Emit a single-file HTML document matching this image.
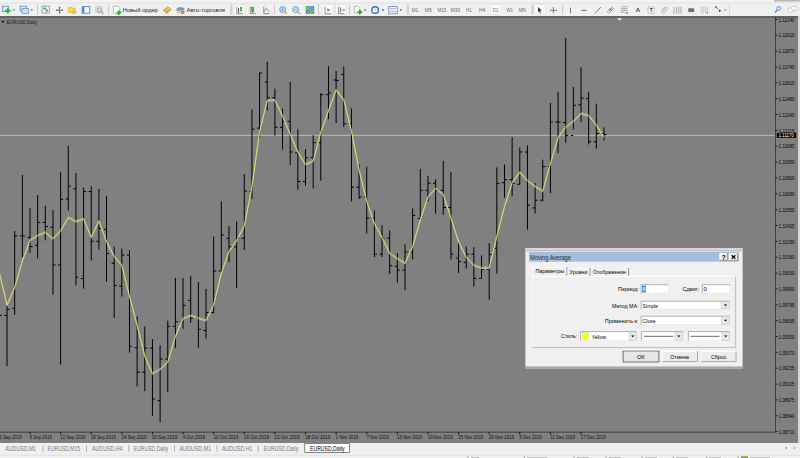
<!DOCTYPE html>
<html><head><meta charset="utf-8">
<style>
*{margin:0;padding:0}
html,body{width:800px;height:458px;overflow:hidden;background:#f0f0f0}
svg{position:absolute;left:0;top:0;font-family:"Liberation Sans", sans-serif}
</style></head><body>
<svg width="800" height="458" viewBox="0 0 800 458">
<rect x="0" y="0" width="800" height="16" fill="#f0f0f0"/>
<rect x="0" y="0" width="800" height="2.6" fill="#f3f3f3"/>
<path d="M0,3H800" stroke="#dcdcdc" stroke-width="0.8"/>
<rect x="774" y="0" width="26" height="1.6" fill="#b8b8b8"/>
<path d="M37.5,4.5V14.5" stroke="#c4c4c4" stroke-width="0.9"/>
<path d="M108.6,4.5V14.5" stroke="#c4c4c4" stroke-width="0.9"/>
<path d="M274.5,4.5V14.5" stroke="#c4c4c4" stroke-width="0.9"/>
<path d="M318.6,4.5V14.5" stroke="#c4c4c4" stroke-width="0.9"/>
<path d="M349.6,4.5V14.5" stroke="#c4c4c4" stroke-width="0.9"/>
<path d="M562.6,4.5V14.5" stroke="#c4c4c4" stroke-width="0.9"/>
<rect x="230.2" y="4.6" width="2.2" height="10.2" fill="#d0d0d0"/>
<rect x="406.8" y="4.6" width="2.2" height="10.2" fill="#d0d0d0"/>
<rect x="531.3" y="4.6" width="2.2" height="10.2" fill="#d0d0d0"/>
<path d="M729.5,3.5V16" stroke="#d4d4d4" stroke-width="0.8"/>
<rect x="234" y="4.3" width="11" height="10.2" fill="#fbfbfb" stroke="#dadada" stroke-width="0.6"/>
<rect x="322" y="4.3" width="11.199999999999989" height="10.2" fill="#fbfbfb" stroke="#dadada" stroke-width="0.6"/>
<rect x="335.4" y="4.3" width="11.200000000000045" height="10.2" fill="#fbfbfb" stroke="#dadada" stroke-width="0.6"/>
<rect x="490.3" y="4.3" width="11.399999999999977" height="10.2" fill="#fbfbfb" stroke="#dadada" stroke-width="0.6"/>
<rect x="534.5" y="4.3" width="11.200000000000045" height="10.2" fill="#fbfbfb" stroke="#dadada" stroke-width="0.6"/>
<rect x="2.4" y="6.2" width="6" height="5.4" fill="#dbe8f5" stroke="#5a8ac6" stroke-width="0.8"/>
<path d="M7.8,8.2V13.4M5.2,10.8H10.6" stroke="#22b822" stroke-width="1.8"/>
<path d="M12.8,9.4H15.2L14,10.8Z" fill="#333"/>
<rect x="20.2" y="6.2" width="6.4" height="5" fill="#e4eef8" stroke="#5a8ac6" stroke-width="0.8"/>
<rect x="22" y="8.6" width="6.6" height="4.8" fill="#d0e0f0" stroke="#6a98cc" stroke-width="0.8"/>
<path d="M30.6,9.4H33L31.8,10.8Z" fill="#333"/>
<rect x="42.1" y="6.2" width="7.2" height="6.8" fill="#fff" stroke="#6a9ad0" stroke-width="0.9"/>
<rect x="43.6" y="7.4" width="2.4" height="2.4" fill="#3cb043" transform="rotate(45 44.8 8.6)"/>
<rect x="45.6" y="9.6" width="2.4" height="2.4" fill="#ec7040" transform="rotate(45 46.8 10.8)"/>
<path d="M59.6,6.8V13.6M56.2,10.2H63" stroke="#666" stroke-width="0.9"/>
<path d="M59.6,6.6L58.6,8H60.6ZM59.6,13.8L58.6,12.4H60.6ZM56,10.2L57.4,9.2V11.2ZM63.2,10.2L61.8,9.2V11.2Z" fill="#555"/>
<path d="M68.3,7.2H71.4L72.2,8H75V12.6H68.3Z" fill="#f3d25a" stroke="#d6a82a" stroke-width="0.5"/>
<path d="M74.4,9.6L75.2,11.2L76.9,11.4L75.6,12.4L76,14L74.4,13.1L72.8,14L73.2,12.4L71.9,11.4L73.6,11.2Z" fill="#f6c830" stroke="#c89a20" stroke-width="0.3"/>
<rect x="82.2" y="6.6" width="7.6" height="6.6" fill="#f4f6fb" stroke="#4f86c8" stroke-width="0.9"/>
<rect x="82.6" y="7" width="1.6" height="5.8" fill="#3a78c2"/>
<rect x="95.8" y="6.4" width="6.4" height="6.4" fill="#f4f4f0" stroke="#b8b8a8" stroke-width="0.6"/>
<circle cx="99.2" cy="10" r="2.2" fill="#cfe4f6" stroke="#5a90c8" stroke-width="0.8"/>
<path d="M100.8,11.6L103.4,14" stroke="#d8a828" stroke-width="1.2"/>
<path d="M113.4,6.2H118.4L119.8,7.6V13.4H113.4Z" fill="#fff" stroke="#a0a0a0" stroke-width="0.7"/>
<path d="M118.8,10.4V15M116.5,12.7H121.1" stroke="#22b022" stroke-width="1.7"/>
<text x="122.8" y="12.3" font-size="6.2" fill="#1a1a2e" textLength="35" lengthAdjust="spacingAndGlyphs">Новый ордер</text>
<path d="M163.4,10.2L167.8,6.8L171.2,9.6L166.8,13.4Z" fill="#e6b42c" stroke="#a87a20" stroke-width="0.6"/>
<path d="M164.8,10.2L167.8,7.8L170,9.6M165.6,11L168.4,8.8" stroke="#fbe9a0" stroke-width="0.5" fill="none"/>
<path d="M176.4,8.8Q180.5,5.4 184.6,8.8L184,12.4H177Z" fill="#5aa0d8"/>
<path d="M176.8,10.4H184.2L183.4,13.2H177.6Z" fill="#f0d040"/>
<circle cx="182.6" cy="12.3" r="2" fill="#d83030" stroke="#fff" stroke-width="0.5"/>
<rect x="182" y="11.8" width="1.2" height="1.2" fill="#fff"/>
<text x="186.5" y="12.2" font-size="6.2" fill="#1a1a2e" textLength="38.5" lengthAdjust="spacingAndGlyphs">Авто-торговля</text>
<path d="M236.8,6.6V13.6H242.8" stroke="#505050" stroke-width="0.6" fill="none"/>
<path d="M238.6,8V12.6M238,11.8H238.6M241,6.8V11.6M241,7.8H241.8" stroke="#222" stroke-width="0.8" fill="none"/>
<path d="M241,7.4V11" stroke="#2a9a2a" stroke-width="0.9"/>
<path d="M250.2,6.6V13.6H256.2" stroke="#505050" stroke-width="0.6" fill="none"/>
<path d="M252.6,6.6V13" stroke="#333" stroke-width="0.5"/>
<rect x="251.6" y="7.6" width="2.2" height="4.2" fill="#30c030" stroke="#1a7a1a" stroke-width="0.4"/>
<path d="M263.8,6.6V13.6H269.8" stroke="#505050" stroke-width="0.6" fill="none"/>
<path d="M264.2,11.6L266,8.4L268,10.2L269.6,11.8" stroke="#2aa02a" stroke-width="0.7" fill="none"/>
<circle cx="282.6" cy="9.6" r="2.9" fill="#cfe6f8" stroke="#4f8fd0" stroke-width="0.9"/>
<path d="M284.6,11.6L287.0,14" stroke="#d8a830" stroke-width="1.3"/>
<circle cx="295.6" cy="9.6" r="2.9" fill="#cfe6f8" stroke="#4f8fd0" stroke-width="0.9"/>
<path d="M297.6,11.6L300.0,14" stroke="#d8a830" stroke-width="1.3"/>
<path d="M281.4,9.6H283.8M282.6,8.4V10.8" stroke="#2a6ab8" stroke-width="0.6"/>
<path d="M294.4,9.6H296.8" stroke="#2a6ab8" stroke-width="0.6"/>
<rect x="305.8" y="6.2" width="4" height="3.6" fill="#3aaa3a"/><rect x="310.2" y="6.2" width="4" height="3.6" fill="#3a78d0"/>
<rect x="305.8" y="10.2" width="4" height="3.6" fill="#3a78d0"/><rect x="310.2" y="10.2" width="4" height="3.6" fill="#3aaa3a"/>
<path d="M306.6,8H308.8M311,8H313.2M306.6,12H308.8M311,12H313.2" stroke="#fff" stroke-width="0.7"/>
<path d="M325,6.6V13.6H331" stroke="#505050" stroke-width="0.6" fill="none"/>
<path d="M327.4,8.2L330.2,10L327.4,11.8Z" fill="#30b030"/>
<path d="M338.4,6.6V13.6H344.4" stroke="#505050" stroke-width="0.6" fill="none"/>
<rect x="339.8" y="7.4" width="1.4" height="5" fill="#4a90d0"/>
<path d="M342,10H344.6M343.6,9L344.6,10L343.6,11" stroke="#e05030" stroke-width="0.8" fill="none"/>
<path d="M354.4,6.4H358.6L359.8,7.6V12.6H354.4Z" fill="#fff" stroke="#a0a0a0" stroke-width="0.7"/>
<path d="M359.8,9.8V14.6M357.4,12.2H362.2" stroke="#22b022" stroke-width="1.7"/>
<path d="M364,9.6H366.4L365.2,11Z" fill="#333"/>
<circle cx="375.1" cy="10" r="3.3" fill="#fff" stroke="#2a74c8" stroke-width="1.4"/>
<path d="M375.1,8.4V10H376" stroke="#555" stroke-width="0.4" fill="none"/>
<path d="M381.8,9.6H384.2L383,11Z" fill="#333"/>
<rect x="388.8" y="6.6" width="8.4" height="7.2" fill="#f4f8fc" stroke="#4f86c8" stroke-width="0.8"/>
<path d="M390,9L392,8.2L394,9L396,8.4" stroke="#e04040" stroke-width="0.6" fill="none"/>
<path d="M390,11.6L392,11L394,11.8L396,11.2" stroke="#40a040" stroke-width="0.6" fill="none"/>
<path d="M399.6,9.6H402L400.8,11Z" fill="#333"/>
<text x="411.8" y="11.8" font-size="5" fill="#6a6a6a" textLength="6.5" lengthAdjust="spacingAndGlyphs">M1</text>
<text x="424.8" y="11.8" font-size="5" fill="#6a6a6a" textLength="7" lengthAdjust="spacingAndGlyphs">M5</text>
<text x="437.5" y="11.8" font-size="5" fill="#6a6a6a" textLength="8.9" lengthAdjust="spacingAndGlyphs">M15</text>
<text x="450.8" y="11.8" font-size="5" fill="#6a6a6a" textLength="9.4" lengthAdjust="spacingAndGlyphs">M30</text>
<text x="466" y="11.8" font-size="5" fill="#6a6a6a" textLength="5.6" lengthAdjust="spacingAndGlyphs">H1</text>
<text x="479" y="11.8" font-size="5" fill="#6a6a6a" textLength="6.4" lengthAdjust="spacingAndGlyphs">H4</text>
<text x="492.7" y="11.8" font-size="5" fill="#6a6a6a" textLength="5.7" lengthAdjust="spacingAndGlyphs">D1</text>
<text x="506.6" y="11.8" font-size="5" fill="#6a6a6a" textLength="6.4" lengthAdjust="spacingAndGlyphs">W1</text>
<text x="518.7" y="11.8" font-size="5" fill="#6a6a6a" textLength="7.3" lengthAdjust="spacingAndGlyphs">MN</text>
<path d="M538,7L541.8,10.6L540,10.8L541,13.2L540.2,13.6L539.2,11.2L538,12.6Z" fill="#333"/>
<path d="M553.4,7V13.6M549.8,10.3H557" stroke="#555" stroke-width="0.7"/>
<path d="M570.5,7.6V13.2" stroke="#555" stroke-width="0.8"/>
<path d="M581.2,10.4H586.8" stroke="#555" stroke-width="0.8"/>
<path d="M595,13.4L600.8,7.2" stroke="#555" stroke-width="0.7"/>
<path d="M607,12L612.6,6.6M608.6,13.4L614,8" stroke="#555" stroke-width="0.6"/>
<path d="M609.6,8.6L611.6,10.6M611.6,8.6L609.6,10.6" stroke="#333" stroke-width="0.6"/>
<path d="M620.8,6.8H627.6M620.8,8.6H627.6M620.8,10.4H627.6M620.8,12.2H625" stroke="#666" stroke-width="0.5"/>
<path d="M625.8,12.6H628.2L627,14Z" fill="#333"/>
<text x="635.4" y="12.1" font-size="5.6" font-weight="bold" fill="#444" textLength="4.6" lengthAdjust="spacingAndGlyphs">A</text>
<rect x="648" y="7" width="6" height="6.4" fill="#f8f8f8" stroke="#999" stroke-width="0.5"/>
<text x="649.4" y="12.4" font-size="5.6" font-weight="bold" fill="#444">T</text>
<path d="M661.4,12.6L667,7M663,13.8L668.4,8.4M661.4,10.8L665.4,6.8" stroke="#777" stroke-width="0.6"/>
<path d="M674,6.8V13.6M676.4,6.8V13.6M678.8,6.8V13.6M681,6.8V13.6" stroke="#888" stroke-width="0.7"/>
<rect x="688.2" y="8.2" width="6" height="3.8" rx="0.8" fill="#707070"/>
<path d="M701.2,6.4V13M703.2,6.4V13M705.2,6.4V13M707.2,6.4V12" stroke="#999" stroke-width="0.5"/>
<path d="M706.2,12.6H708.4L707.3,13.8Z" fill="#444"/>
<path d="M715.6,6.8L718,9.2M716.8,6.8H715.6V8" stroke="#333" stroke-width="0.7" fill="none"/>
<path d="M718.6,9.6L721.2,10.4L719.4,12.2Z" fill="#333"/>
<path d="M724.2,9.6H726L725.1,10.8Z" fill="#333"/>
<circle cx="778.8" cy="8.4" r="1.8" fill="#fff" stroke="#2a70d0" stroke-width="0.9"/>
<path d="M777.4,9.8L775,12.4" stroke="#2a70d0" stroke-width="1.2"/>
<ellipse cx="791" cy="10" rx="3.6" ry="2.4" fill="#fafafa" stroke="#b0b0b0" stroke-width="0.6"/>
<ellipse cx="794.2" cy="8.4" rx="3.4" ry="2.2" fill="#fafafa" stroke="#b0b0b0" stroke-width="0.6"/>
<rect x="0" y="16" width="798" height="427" fill="#808080"/>
<rect x="0" y="16.3" width="798" height="1.4" fill="#585858"/>
<rect x="798" y="16" width="2" height="427" fill="#d8d8d8"/>
<path d="M0,135.3H775" stroke="#c4c4c4" stroke-width="0.9"/>
<path d="M7.04,305.6V366.1M4.44,315.4H7.04M7.04,309.3H9.64M14.69,231.0V314.9M12.09,308.3H14.69M14.69,235.8H17.29M22.35,174.9V257.2M19.75,235.8H22.35M22.35,236.0H24.95M30.00,208.0V252.7M27.40,237.4H30.00M30.00,246.6H32.60M37.65,195.2V258.4M35.05,245.3H37.65M37.65,222.4H40.25M45.31,205.8V240.4M42.71,222.4H45.31M45.31,226.5H47.91M52.96,210.0V294.6M50.36,227.3H52.96M52.96,265.0H55.56M60.61,172.3V364.5M58.01,265.0H60.61M60.61,199.3H63.21M68.27,145.7V210.7M65.67,199.0H68.27M68.27,186.2H70.86M75.92,173.2V285.4M73.32,188.8H75.92M75.92,277.2H78.52M83.57,187.5V288.7M80.97,278.5H83.57M83.57,191.6H86.17M91.22,186.2V260.5M88.62,191.6H91.22M91.22,241.2H93.82M98.88,188.8V249.7M96.28,241.2H98.88M98.88,228.4H101.48M106.53,195.7V281.8M103.93,229.4H106.53M106.53,253.5H109.13M114.18,246.4V317.8M111.58,263.3H114.18M114.18,285.4H116.78M121.84,248.6V296.5M119.24,286.2H121.84M121.84,255.1H124.44M129.49,250.2V352.6M126.89,255.1H129.49M129.49,346.3H132.09M137.14,316.5V386.3M134.54,347.7H137.14M137.14,372.2H139.74M144.79,326.4V391.2M142.19,372.2H144.79M144.79,348.1H147.39M152.45,339.1V415.8M149.85,348.1H152.45M152.45,399.0H155.05M160.10,345.2V422.3M157.50,400.7H160.10M160.10,359.1H162.70M167.75,320.6V392.0M165.15,359.1H167.75M167.75,326.4H170.35M175.41,278.1V348.1M172.81,326.4H175.41M175.41,321.8H178.01M183.06,278.1V328.8M180.46,321.8H183.06M183.06,305.4H185.66M190.71,275.9V322.8M188.11,300.5H190.71M190.71,318.0H193.31M198.37,282.0V348.0M195.77,318.0H198.37M198.37,329.3H200.97M206.02,289.0V338.7M203.42,330.5H206.02M206.02,312.5H208.62M213.67,236.6V313.5M211.07,312.5H213.67M213.67,271.0H216.27M221.32,201.4V272.5M218.72,271.0H221.32M221.32,235.0H223.92M228.98,226.0V262.0M226.38,238.3H228.98M228.98,246.8H231.58M236.63,221.6V288.0M234.03,246.8H236.63M236.63,238.3H239.23M244.28,174.2V250.0M241.68,238.3H244.28M244.28,191.1H246.88M251.94,109.3V198.8M249.34,191.3H251.94M251.94,129.2H254.54M259.59,72.7V138.3M256.99,128.2H259.59M259.59,73.0H262.19M267.24,61.9V110.4M264.64,82.0H267.24M267.24,97.9H269.84M274.90,88.6V135.7M272.30,97.9H274.90M274.90,127.3H277.50M282.55,108.7V149.7M279.95,127.3H282.55M282.55,121.3H285.15M290.20,82.0V165.1M287.60,121.3H290.20M290.20,152.0H292.80M297.85,129.5V189.7M295.25,152.8H297.85M297.85,181.5H300.45M305.51,149.2V185.6M302.91,181.5H305.51M305.51,157.7H308.11M313.16,135.2V188.5M310.56,157.4H313.16M313.16,142.7H315.76M320.81,93.0V180.7M318.21,142.7H320.81M320.81,94.7H323.41M328.47,66.2V119.2M325.87,94.7H328.47M328.47,93.0H331.07M336.12,71.1V123.0M333.52,80.0H336.12M336.12,80.4H338.72M343.77,66.5V127.0M341.17,74.4H343.77M343.77,123.8H346.37M351.43,108.5V201.5M348.83,123.8H351.43M351.43,187.2H354.03M359.08,164.3V199.0M356.48,187.2H359.08M359.08,197.0H361.68M366.73,166.7V233.5M364.13,197.0H366.73M366.73,218.0H369.33M374.38,210.6V257.2M371.78,218.0H374.38M374.38,254.2H376.99M382.04,225.2V257.0M379.44,254.2H382.04M382.04,238.2H384.64M389.69,230.4V273.9M387.09,238.2H389.69M389.69,265.7H392.29M397.34,252.9V282.7M394.74,266.3H397.34M397.34,270.1H399.94M405.00,244.4V290.2M402.40,270.1H405.00M405.00,252.1H407.60M412.65,208.3V259.5M410.05,252.1H412.65M412.65,215.3H415.25M420.30,169.0V218.6M417.70,218.6H420.30M420.30,190.3H422.90M427.96,176.0V201.7M425.36,190.3H427.96M427.96,183.2H430.56M435.61,179.3V213.7M433.01,183.2H435.61M435.61,190.3H438.21M443.26,160.8V214.8M440.66,190.3H443.26M443.26,207.5H445.86M450.91,171.8V259.5M448.31,207.5H450.91M450.91,254.2H453.51M458.57,243.1V272.9M455.97,258.2H458.57M458.57,261.4H461.17M466.22,246.4V268.5M463.62,262.4H466.22M466.22,254.2H468.82M473.87,247.2V286.5M471.27,254.2H473.87M473.87,278.3H476.47M481.53,255.4V278.3M478.93,278.3H481.53M481.53,269.3H484.13M489.18,243.1V299.6M486.58,269.3H489.18M489.18,254.6H491.78M496.83,167.4V273.4M494.23,248.3H496.83M496.83,183.3H499.43M504.49,164.6V197.7M501.89,182.7H504.49M504.49,179.7H507.09M512.14,137.2V196.4M509.54,179.7H512.14M512.14,183.3H514.74M519.79,147.4V184.3M517.19,184.3H519.79M519.79,152.0H522.39M527.44,145.4V229.7M524.84,152.0H527.44M527.44,205.1H530.04M535.10,183.0V213.3M532.50,207.9H535.10M535.10,200.2H537.70M542.75,159.7V201.3M540.15,200.2H542.75M542.75,166.6H545.35M550.40,102.9V193.2M547.80,166.6H550.40M550.40,122.0H553.00M558.06,91.9V153.1M555.46,122.0H558.06M558.06,122.0H560.66M565.71,37.9V142.8M563.11,122.5H565.71M565.71,135.6H568.31M573.36,87.0V129.4M570.76,135.6H573.36M573.36,105.2H575.96M581.02,67.3V122.0M578.42,104.8H581.02M581.02,98.0H583.62M588.67,91.9V144.4M586.07,98.6H588.67M588.67,141.7H591.27M596.32,103.7V148.7M593.72,141.7H596.32M596.32,133.5H598.92M603.98,127.4V140.5M601.38,133.5H603.98M603.98,134.6H606.58M-0.11,315.4H1.99" stroke="#000" stroke-width="1" fill="none"/>
<polyline points="-0.61,272.0 7.04,304.7 14.69,286.8 22.35,260.4 30.00,239.5 37.65,235.0 45.31,231.8 52.96,238.0 60.61,230.3 68.27,216.8 75.92,220.9 83.57,218.3 91.22,236.7 98.88,220.4 106.53,241.0 114.18,255.8 121.84,264.7 129.49,295.6 137.14,324.5 144.79,355.5 152.45,373.1 160.10,368.7 167.75,361.5 175.41,335.8 183.06,317.9 190.71,315.1 198.37,317.6 206.02,319.9 213.67,304.3 221.32,272.8 228.98,250.9 236.63,240.0 244.28,225.4 251.94,186.2 259.59,131.1 267.24,100.0 274.90,99.4 282.55,115.5 290.20,133.5 297.85,151.6 305.51,163.7 313.16,160.6 320.81,131.7 328.47,110.1 336.12,89.4 343.77,99.1 351.43,130.5 359.08,169.3 366.73,200.7 374.38,223.1 382.04,236.8 389.69,252.7 397.34,258.0 405.00,262.6 412.65,245.8 420.30,219.2 427.96,196.3 435.61,187.9 443.26,193.7 450.91,217.3 458.57,241.0 466.22,256.6 473.87,264.6 481.53,267.3 489.18,267.4 496.83,235.7 504.49,205.9 512.14,182.1 519.79,171.7 527.44,180.1 535.10,185.8 542.75,190.6 550.40,162.9 558.06,136.9 565.71,126.5 573.36,120.9 581.02,112.9 588.67,115.0 596.32,124.4 603.98,136.6" stroke="#dcdcdc" stroke-width="0.7" fill="none" transform="translate(0,1.2)"/>
<polyline points="-0.61,272.0 7.04,304.7 14.69,286.8 22.35,260.4 30.00,239.5 37.65,235.0 45.31,231.8 52.96,238.0 60.61,230.3 68.27,216.8 75.92,220.9 83.57,218.3 91.22,236.7 98.88,220.4 106.53,241.0 114.18,255.8 121.84,264.7 129.49,295.6 137.14,324.5 144.79,355.5 152.45,373.1 160.10,368.7 167.75,361.5 175.41,335.8 183.06,317.9 190.71,315.1 198.37,317.6 206.02,319.9 213.67,304.3 221.32,272.8 228.98,250.9 236.63,240.0 244.28,225.4 251.94,186.2 259.59,131.1 267.24,100.0 274.90,99.4 282.55,115.5 290.20,133.5 297.85,151.6 305.51,163.7 313.16,160.6 320.81,131.7 328.47,110.1 336.12,89.4 343.77,99.1 351.43,130.5 359.08,169.3 366.73,200.7 374.38,223.1 382.04,236.8 389.69,252.7 397.34,258.0 405.00,262.6 412.65,245.8 420.30,219.2 427.96,196.3 435.61,187.9 443.26,193.7 450.91,217.3 458.57,241.0 466.22,256.6 473.87,264.6 481.53,267.3 489.18,267.4 496.83,235.7 504.49,205.9 512.14,182.1 519.79,171.7 527.44,180.1 535.10,185.8 542.75,190.6 550.40,162.9 558.06,136.9 565.71,126.5 573.36,120.9 581.02,112.9 588.67,115.0 596.32,124.4 603.98,136.6" stroke="#e2e23c" stroke-width="0.75" fill="none"/>
<path d="M775.5,17V432.5M0,432.2H775.5" stroke="#303030" stroke-width="0.8"/>
<path d="M775.5,19.4H777.6" stroke="#000" stroke-width="0.8"/>
<text x="778.8" y="21.5" font-size="5.0" fill="#000" textLength="15.7" lengthAdjust="spacingAndGlyphs" >1.12140</text>
<path d="M775.5,35.3H777.6" stroke="#000" stroke-width="0.8"/>
<text x="778.8" y="37.4" font-size="5.0" fill="#000" textLength="15.7" lengthAdjust="spacingAndGlyphs" >1.12010</text>
<path d="M775.5,51.1H777.6" stroke="#000" stroke-width="0.8"/>
<text x="778.8" y="53.2" font-size="5.0" fill="#000" textLength="15.7" lengthAdjust="spacingAndGlyphs" >1.11875</text>
<path d="M775.5,67.0H777.6" stroke="#000" stroke-width="0.8"/>
<text x="778.8" y="69.1" font-size="5.0" fill="#000" textLength="15.7" lengthAdjust="spacingAndGlyphs" >1.11745</text>
<path d="M775.5,82.8H777.6" stroke="#000" stroke-width="0.8"/>
<text x="778.8" y="84.9" font-size="5.0" fill="#000" textLength="15.7" lengthAdjust="spacingAndGlyphs" >1.11615</text>
<path d="M775.5,98.7H777.6" stroke="#000" stroke-width="0.8"/>
<text x="778.8" y="100.8" font-size="5.0" fill="#000" textLength="15.7" lengthAdjust="spacingAndGlyphs" >1.11480</text>
<path d="M775.5,114.5H777.6" stroke="#000" stroke-width="0.8"/>
<text x="778.8" y="116.6" font-size="5.0" fill="#000" textLength="15.7" lengthAdjust="spacingAndGlyphs" >1.11345</text>
<path d="M775.5,130.4H777.6" stroke="#000" stroke-width="0.8"/>
<text x="778.8" y="132.5" font-size="5.0" fill="#000" textLength="15.7" lengthAdjust="spacingAndGlyphs" >1.11215</text>
<path d="M775.5,146.2H777.6" stroke="#000" stroke-width="0.8"/>
<text x="778.8" y="148.3" font-size="5.0" fill="#000" textLength="15.7" lengthAdjust="spacingAndGlyphs" >1.11085</text>
<path d="M775.5,162.1H777.6" stroke="#000" stroke-width="0.8"/>
<text x="778.8" y="164.2" font-size="5.0" fill="#000" textLength="15.7" lengthAdjust="spacingAndGlyphs" >1.10950</text>
<path d="M775.5,178.0H777.6" stroke="#000" stroke-width="0.8"/>
<text x="778.8" y="180.1" font-size="5.0" fill="#000" textLength="15.7" lengthAdjust="spacingAndGlyphs" >1.10820</text>
<path d="M775.5,193.8H777.6" stroke="#000" stroke-width="0.8"/>
<text x="778.8" y="195.9" font-size="5.0" fill="#000" textLength="15.7" lengthAdjust="spacingAndGlyphs" >1.10690</text>
<path d="M775.5,209.7H777.6" stroke="#000" stroke-width="0.8"/>
<text x="778.8" y="211.8" font-size="5.0" fill="#000" textLength="15.7" lengthAdjust="spacingAndGlyphs" >1.10555</text>
<path d="M775.5,225.5H777.6" stroke="#000" stroke-width="0.8"/>
<text x="778.8" y="227.6" font-size="5.0" fill="#000" textLength="15.7" lengthAdjust="spacingAndGlyphs" >1.10425</text>
<path d="M775.5,241.4H777.6" stroke="#000" stroke-width="0.8"/>
<text x="778.8" y="243.5" font-size="5.0" fill="#000" textLength="15.7" lengthAdjust="spacingAndGlyphs" >1.10290</text>
<path d="M775.5,257.2H777.6" stroke="#000" stroke-width="0.8"/>
<text x="778.8" y="259.3" font-size="5.0" fill="#000" textLength="15.7" lengthAdjust="spacingAndGlyphs" >1.10160</text>
<path d="M775.5,273.1H777.6" stroke="#000" stroke-width="0.8"/>
<text x="778.8" y="275.2" font-size="5.0" fill="#000" textLength="15.7" lengthAdjust="spacingAndGlyphs" >1.10030</text>
<path d="M775.5,288.9H777.6" stroke="#000" stroke-width="0.8"/>
<text x="778.8" y="291.0" font-size="5.0" fill="#000" textLength="15.7" lengthAdjust="spacingAndGlyphs" >1.09900</text>
<path d="M775.5,304.8H777.6" stroke="#000" stroke-width="0.8"/>
<text x="778.8" y="306.9" font-size="5.0" fill="#000" textLength="15.7" lengthAdjust="spacingAndGlyphs" >1.09765</text>
<path d="M775.5,320.6H777.6" stroke="#000" stroke-width="0.8"/>
<text x="778.8" y="322.7" font-size="5.0" fill="#000" textLength="15.7" lengthAdjust="spacingAndGlyphs" >1.09635</text>
<path d="M775.5,336.5H777.6" stroke="#000" stroke-width="0.8"/>
<text x="778.8" y="338.6" font-size="5.0" fill="#000" textLength="15.7" lengthAdjust="spacingAndGlyphs" >1.09500</text>
<path d="M775.5,352.4H777.6" stroke="#000" stroke-width="0.8"/>
<text x="778.8" y="354.5" font-size="5.0" fill="#000" textLength="15.7" lengthAdjust="spacingAndGlyphs" >1.09370</text>
<path d="M775.5,368.2H777.6" stroke="#000" stroke-width="0.8"/>
<text x="778.8" y="370.3" font-size="5.0" fill="#000" textLength="15.7" lengthAdjust="spacingAndGlyphs" >1.09235</text>
<path d="M775.5,384.1H777.6" stroke="#000" stroke-width="0.8"/>
<text x="778.8" y="386.2" font-size="5.0" fill="#000" textLength="15.7" lengthAdjust="spacingAndGlyphs" >1.09105</text>
<path d="M775.5,399.9H777.6" stroke="#000" stroke-width="0.8"/>
<text x="778.8" y="402.0" font-size="5.0" fill="#000" textLength="15.7" lengthAdjust="spacingAndGlyphs" >1.08975</text>
<path d="M775.5,415.8H777.6" stroke="#000" stroke-width="0.8"/>
<text x="778.8" y="417.9" font-size="5.0" fill="#000" textLength="15.7" lengthAdjust="spacingAndGlyphs" >1.08840</text>
<path d="M775.5,431.6H777.6" stroke="#000" stroke-width="0.8"/>
<text x="778.8" y="433.7" font-size="5.0" fill="#000" textLength="15.7" lengthAdjust="spacingAndGlyphs" >1.08710</text>
<text x="-0.7" y="439.1" font-size="5.5" fill="#101010" textLength="22.3" lengthAdjust="spacingAndGlyphs" >3 Sep 2019</text>
<path d="M30.00,432V434.4" stroke="#000" stroke-width="0.8"/>
<text x="29.7" y="439.1" font-size="5.5" fill="#101010" textLength="22.3" lengthAdjust="spacingAndGlyphs" >6 Sep 2019</text>
<path d="M60.61,432V434.4" stroke="#000" stroke-width="0.8"/>
<text x="60.3" y="439.1" font-size="5.5" fill="#101010" textLength="25.0" lengthAdjust="spacingAndGlyphs" >12 Sep 2019</text>
<path d="M91.22,432V434.4" stroke="#000" stroke-width="0.8"/>
<text x="90.9" y="439.1" font-size="5.5" fill="#101010" textLength="25.0" lengthAdjust="spacingAndGlyphs" >18 Sep 2019</text>
<path d="M121.84,432V434.4" stroke="#000" stroke-width="0.8"/>
<text x="121.5" y="439.1" font-size="5.5" fill="#101010" textLength="25.0" lengthAdjust="spacingAndGlyphs" >24 Sep 2019</text>
<path d="M152.45,432V434.4" stroke="#000" stroke-width="0.8"/>
<text x="152.1" y="439.1" font-size="5.5" fill="#101010" textLength="25.0" lengthAdjust="spacingAndGlyphs" >30 Sep 2019</text>
<path d="M183.06,432V434.4" stroke="#000" stroke-width="0.8"/>
<text x="182.8" y="439.1" font-size="5.5" fill="#101010" textLength="22.3" lengthAdjust="spacingAndGlyphs" >4 Oct 2019</text>
<path d="M213.67,432V434.4" stroke="#000" stroke-width="0.8"/>
<text x="213.4" y="439.1" font-size="5.5" fill="#101010" textLength="25.0" lengthAdjust="spacingAndGlyphs" >10 Oct 2019</text>
<path d="M244.28,432V434.4" stroke="#000" stroke-width="0.8"/>
<text x="244.0" y="439.1" font-size="5.5" fill="#101010" textLength="25.0" lengthAdjust="spacingAndGlyphs" >16 Oct 2019</text>
<path d="M274.90,432V434.4" stroke="#000" stroke-width="0.8"/>
<text x="274.6" y="439.1" font-size="5.5" fill="#101010" textLength="25.0" lengthAdjust="spacingAndGlyphs" >22 Oct 2019</text>
<path d="M305.51,432V434.4" stroke="#000" stroke-width="0.8"/>
<text x="305.2" y="439.1" font-size="5.5" fill="#101010" textLength="25.0" lengthAdjust="spacingAndGlyphs" >28 Oct 2019</text>
<path d="M336.12,432V434.4" stroke="#000" stroke-width="0.8"/>
<text x="335.8" y="439.1" font-size="5.5" fill="#101010" textLength="22.3" lengthAdjust="spacingAndGlyphs" >1 Nov 2019</text>
<path d="M366.73,432V434.4" stroke="#000" stroke-width="0.8"/>
<text x="366.4" y="439.1" font-size="5.5" fill="#101010" textLength="22.3" lengthAdjust="spacingAndGlyphs" >7 Nov 2019</text>
<path d="M397.34,432V434.4" stroke="#000" stroke-width="0.8"/>
<text x="397.0" y="439.1" font-size="5.5" fill="#101010" textLength="25.0" lengthAdjust="spacingAndGlyphs" >13 Nov 2019</text>
<path d="M427.96,432V434.4" stroke="#000" stroke-width="0.8"/>
<text x="427.7" y="439.1" font-size="5.5" fill="#101010" textLength="25.0" lengthAdjust="spacingAndGlyphs" >19 Nov 2019</text>
<path d="M458.57,432V434.4" stroke="#000" stroke-width="0.8"/>
<text x="458.3" y="439.1" font-size="5.5" fill="#101010" textLength="25.0" lengthAdjust="spacingAndGlyphs" >25 Nov 2019</text>
<path d="M489.18,432V434.4" stroke="#000" stroke-width="0.8"/>
<text x="488.9" y="439.1" font-size="5.5" fill="#101010" textLength="25.0" lengthAdjust="spacingAndGlyphs" >29 Nov 2019</text>
<path d="M519.79,432V434.4" stroke="#000" stroke-width="0.8"/>
<text x="519.5" y="439.1" font-size="5.5" fill="#101010" textLength="22.3" lengthAdjust="spacingAndGlyphs" >5 Dec 2019</text>
<path d="M550.40,432V434.4" stroke="#000" stroke-width="0.8"/>
<text x="550.1" y="439.1" font-size="5.5" fill="#101010" textLength="25.0" lengthAdjust="spacingAndGlyphs" >11 Dec 2019</text>
<path d="M581.02,432V434.4" stroke="#000" stroke-width="0.8"/>
<text x="580.7" y="439.1" font-size="5.5" fill="#101010" textLength="25.0" lengthAdjust="spacingAndGlyphs" >17 Dec 2019</text>
<rect x="776.8" y="132.8" width="19.4" height="5" fill="#000"/>
<text x="778.6" y="137.1" font-size="5" fill="#fff" textLength="15.4" lengthAdjust="spacingAndGlyphs" >1.11170</text>
<path d="M1.4,20.9H4.4L2.9,22.9Z" fill="#000"/>
<text x="6.8" y="24.2" font-size="5.6" fill="#1a1a1a" textLength="30.3" lengthAdjust="spacingAndGlyphs" >EURUSD,Daily</text>
<path d="M617.1,18.2H621.9L619.5,20.7Z" fill="#e8e8e8"/>
<rect x="525" y="248" width="218" height="121" fill="#a8a8a8"/>
<rect x="525.6" y="248" width="216.8" height="118.4" fill="#f0f0f0"/>
<rect x="525.6" y="248" width="216.8" height="3.6" fill="#d6d6d6"/>
<path d="M525.6,250.6H742.4" stroke="#bdbdbd" stroke-width="0.8"/>
<rect x="529" y="252" width="210" height="9.7" fill="#a5bedb"/>
<text x="530" y="259.6" font-size="6.8" fill="#1b2838" textLength="41" lengthAdjust="spacingAndGlyphs" >Moving Average</text>
<rect x="719.5" y="253.3" width="8.299999999999955" height="7.5" fill="#f0f0f0"/><path d="M719.9,260.8V253.70000000000002H727.8" stroke="#ffffff" stroke-width="0.8" fill="none"/><path d="M719.5,260.40000000000003H727.4V253.3" stroke="#808080" stroke-width="0.8" fill="none"/>
<text x="721.5" y="260" font-size="7" font-weight="bold" fill="#000">?</text>
<rect x="729" y="253.3" width="9" height="7.5" fill="#f0f0f0"/><path d="M729.4,260.8V253.70000000000002H738" stroke="#ffffff" stroke-width="0.8" fill="none"/><path d="M729,260.40000000000003H737.6V253.3" stroke="#808080" stroke-width="0.8" fill="none"/>
<path d="M731.6,255.2L735.4,258.9M735.4,255.2L731.6,258.9" stroke="#000" stroke-width="1.25"/>
<path d="M532,348V276H736V348Z" fill="#f0f0f0"/>
<path d="M532.4,348V276.4H736" stroke="#ffffff" stroke-width="0.8" fill="none"/>
<path d="M532,347.6H735.6V276" stroke="#a0a0a0" stroke-width="0.8" fill="none"/>
<path d="M532.4,347.2H735.2V276.4" stroke="#d8d8d8" stroke-width="0.6" fill="none"/>
<path d="M532.4,276V267.2H566.6" stroke="#ffffff" stroke-width="0.8" fill="none"/>
<path d="M567,267V276" stroke="#808080" stroke-width="0.9"/>
<path d="M567.8,276.4V268.4H589.6" stroke="#ffffff" stroke-width="0.6" fill="none"/>
<path d="M590,268.2V276" stroke="#8a8a8a" stroke-width="0.9"/>
<path d="M628.6,268.2V276" stroke="#8a8a8a" stroke-width="0.9"/>
<path d="M567.5,276.3H736" stroke="#ffffff" stroke-width="0.6"/>
<text x="535.5" y="273.4" font-size="6.1" fill="#000" textLength="28.5" lengthAdjust="spacingAndGlyphs" >Параметры</text>
<text x="569.5" y="274.0" font-size="6.1" fill="#000" textLength="18" lengthAdjust="spacingAndGlyphs" >Уровни</text>
<text x="593" y="274.0" font-size="6.1" fill="#000" textLength="33" lengthAdjust="spacingAndGlyphs" >Отображение</text>
<text x="618" y="291.4" font-size="6.1" fill="#000" textLength="20.8" lengthAdjust="spacingAndGlyphs" >Период:</text>
<text x="682.5" y="291.4" font-size="6.1" fill="#000" textLength="17" lengthAdjust="spacingAndGlyphs" >Сдвиг:</text>
<text x="612" y="307.6" font-size="6.1" fill="#000" textLength="26.4" lengthAdjust="spacingAndGlyphs" >Метод MA:</text>
<text x="604.8" y="322.8" font-size="6.1" fill="#000" textLength="33.6" lengthAdjust="spacingAndGlyphs" >Применить к:</text>
<text x="561" y="338.4" font-size="6.1" fill="#000" textLength="16" lengthAdjust="spacingAndGlyphs" >Стиль:</text>
<rect x="640.8" y="284.3" width="28.300000000000068" height="9.300000000000011" fill="#ffffff"/><path d="M641.1999999999999,293.6V284.7H669.1" stroke="#9a9a9a" stroke-width="0.8" fill="none"/><path d="M640.8,293.20000000000005H668.7V284.3" stroke="#e6e6e6" stroke-width="0.8" fill="none"/>
<rect x="642" y="285.6" width="4" height="6.8" fill="#3390ff"/>
<text x="642.3" y="291.4" font-size="6.1" fill="#ffffff" >8</text>
<rect x="702" y="284.3" width="28.200000000000045" height="9.300000000000011" fill="#ffffff"/><path d="M702.4,293.6V284.7H730.2" stroke="#9a9a9a" stroke-width="0.8" fill="none"/><path d="M702,293.20000000000005H729.8000000000001V284.3" stroke="#e6e6e6" stroke-width="0.8" fill="none"/>
<text x="703.6" y="291.4" font-size="6.1" fill="#000" >0</text>
<rect x="640.8" y="300.8" width="89.40000000000009" height="8.899999999999977" fill="#ffffff"/><path d="M641.1999999999999,309.7V301.2H730.2" stroke="#9a9a9a" stroke-width="0.8" fill="none"/><path d="M640.8,309.3H729.8000000000001V300.8" stroke="#e6e6e6" stroke-width="0.8" fill="none"/>
<rect x="721.6" y="301.8" width="7.7999999999999545" height="7.0" fill="#e8e8e8" stroke="#c0c0c0" stroke-width="0.5"/><path d="M723.9,304.6H727.1L725.5,306.3Z" fill="#000"/>
<text x="642.6" y="307.6" font-size="6.1" fill="#000" textLength="15.6" lengthAdjust="spacingAndGlyphs" >Simple</text>
<rect x="640.8" y="315.8" width="89.40000000000009" height="9.199999999999989" fill="#ffffff"/><path d="M641.1999999999999,325V316.2H730.2" stroke="#9a9a9a" stroke-width="0.8" fill="none"/><path d="M640.8,324.6H729.8000000000001V315.8" stroke="#e6e6e6" stroke-width="0.8" fill="none"/>
<rect x="721.6" y="316.8" width="7.7999999999999545" height="7.399999999999977" fill="#e8e8e8" stroke="#c0c0c0" stroke-width="0.5"/><path d="M723.9,319.8H727.1L725.5,321.5Z" fill="#000"/>
<text x="642.6" y="322.8" font-size="6.1" fill="#000" textLength="13" lengthAdjust="spacingAndGlyphs" >Close</text>
<rect x="580.2" y="331.2" width="56.69999999999993" height="9.900000000000034" fill="#ffffff"/><path d="M580.6,341.1V331.59999999999997H636.9" stroke="#9a9a9a" stroke-width="0.8" fill="none"/><path d="M580.2,340.70000000000005H636.5V331.2" stroke="#e6e6e6" stroke-width="0.8" fill="none"/>
<rect x="582.6" y="332.8" width="5.8" height="6.6" fill="#ffff00" stroke="#b0b0b0" stroke-width="0.3"/>
<text x="591.5" y="338.6" font-size="6.1" fill="#000" textLength="14.5" lengthAdjust="spacingAndGlyphs" >Yellow</text>
<rect x="629" y="332" width="7.399999999999977" height="8.399999999999977" fill="#e8e8e8" stroke="#c0c0c0" stroke-width="0.5"/><path d="M631.1,335.5H634.3000000000001L632.7,337.2Z" fill="#000"/>
<rect x="641" y="331.2" width="42.299999999999955" height="9.900000000000034" fill="#ffffff"/><path d="M641.4,341.1V331.59999999999997H683.3" stroke="#9a9a9a" stroke-width="0.8" fill="none"/><path d="M641,340.70000000000005H682.9V331.2" stroke="#e6e6e6" stroke-width="0.8" fill="none"/>
<path d="M644,336.3H673" stroke="#000" stroke-width="0.6"/>
<rect x="675" y="332" width="7.600000000000023" height="8.399999999999977" fill="#e8e8e8" stroke="#c0c0c0" stroke-width="0.5"/><path d="M677.1999999999999,335.5H680.4L678.8,337.2Z" fill="#000"/>
<rect x="688" y="331.2" width="42.10000000000002" height="9.900000000000034" fill="#ffffff"/><path d="M688.4,341.1V331.59999999999997H730.1" stroke="#9a9a9a" stroke-width="0.8" fill="none"/><path d="M688,340.70000000000005H729.7V331.2" stroke="#e6e6e6" stroke-width="0.8" fill="none"/>
<path d="M690.5,336.3H719.4" stroke="#000" stroke-width="0.6"/>
<rect x="721.9" y="332" width="7.7000000000000455" height="8.399999999999977" fill="#e8e8e8" stroke="#c0c0c0" stroke-width="0.5"/><path d="M724.15,335.5H727.35L725.75,337.2Z" fill="#000"/>
<rect x="623.1" y="351.2" width="35.8" height="10.8" fill="#e6e6e6" stroke="#6e6e6e" stroke-width="1"/>
<path d="M624,352H658" stroke="#f8f8f8" stroke-width="0.6"/>
<text x="637" y="358.9" font-size="6.1" fill="#000" textLength="8" lengthAdjust="spacingAndGlyphs" >OK</text>
<rect x="662" y="351.2" width="35.89999999999998" height="10.800000000000011" fill="#ececec"/><path d="M662.4,362V351.59999999999997H697.9" stroke="#ffffff" stroke-width="0.8" fill="none"/><path d="M662,361.6H697.5V351.2" stroke="#9a9a9a" stroke-width="0.8" fill="none"/>
<text x="670.2" y="358.9" font-size="6.1" fill="#000" textLength="18.8" lengthAdjust="spacingAndGlyphs" >Отмена</text>
<rect x="700.8" y="351.2" width="35.700000000000045" height="10.800000000000011" fill="#ececec"/><path d="M701.1999999999999,362V351.59999999999997H736.5" stroke="#ffffff" stroke-width="0.8" fill="none"/><path d="M700.8,361.6H736.1V351.2" stroke="#9a9a9a" stroke-width="0.8" fill="none"/>
<text x="710.9" y="358.9" font-size="6.1" fill="#000" textLength="15.4" lengthAdjust="spacingAndGlyphs" >Сброс</text>
<rect x="0" y="443" width="800" height="15" fill="#f0f0f0"/>
<text x="5.2" y="450.8" font-size="6.4" fill="#787878" textLength="30.8" lengthAdjust="spacingAndGlyphs" >AUDUSD,M1</text>
<text x="47.6" y="450.8" font-size="6.4" fill="#787878" textLength="32.6" lengthAdjust="spacingAndGlyphs" >EURUSD,M15</text>
<text x="92" y="450.8" font-size="6.4" fill="#787878" textLength="30.5" lengthAdjust="spacingAndGlyphs" >AUDUSD,H4</text>
<text x="133.8" y="450.8" font-size="6.4" fill="#787878" textLength="34.2" lengthAdjust="spacingAndGlyphs" >EURUSD,Daily</text>
<text x="179.5" y="450.8" font-size="6.4" fill="#787878" textLength="31.7" lengthAdjust="spacingAndGlyphs" >AUDUSD,M1</text>
<text x="222" y="450.8" font-size="6.4" fill="#787878" textLength="30.5" lengthAdjust="spacingAndGlyphs" >AUDUSD,H1</text>
<text x="263.8" y="450.8" font-size="6.4" fill="#787878" textLength="34.4" lengthAdjust="spacingAndGlyphs" >EURUSD,Daily</text>
<path d="M43,445.3V451.8" stroke="#a0a0a0" stroke-width="0.8"/>
<path d="M86.5,445.3V451.8" stroke="#a0a0a0" stroke-width="0.8"/>
<path d="M128.8,445.3V451.8" stroke="#a0a0a0" stroke-width="0.8"/>
<path d="M174.5,445.3V451.8" stroke="#a0a0a0" stroke-width="0.8"/>
<path d="M217,445.3V451.8" stroke="#a0a0a0" stroke-width="0.8"/>
<path d="M258.3,445.3V451.8" stroke="#a0a0a0" stroke-width="0.8"/>
<rect x="304.8" y="443.4" width="44.6" height="9" fill="#fff" stroke="#505050" stroke-width="0.7"/>
<text x="310" y="450.8" font-size="6.4" fill="#000" textLength="34.5" lengthAdjust="spacingAndGlyphs" >EURUSD,Daily</text>
<path d="M787,446.6V449.2L785,447.9Z" fill="#909090"/>
<path d="M793.6,446.6V449.2L795.6,447.9Z" fill="#909090"/>
<path d="M0,455.2H800" stroke="#d8d8d8" stroke-width="0.6"/>
<path d="M468,456V458" stroke="#a0a0a0" stroke-width="0.8"/>
<path d="M524.5,456V458" stroke="#a0a0a0" stroke-width="0.8"/>
<path d="M574,456V458" stroke="#a0a0a0" stroke-width="0.8"/>
<path d="M606,456V458" stroke="#a0a0a0" stroke-width="0.8"/>
<path d="M642,456V458" stroke="#a0a0a0" stroke-width="0.8"/>
<path d="M673.4,456V458" stroke="#a0a0a0" stroke-width="0.8"/>
<path d="M706.7,456V458" stroke="#a0a0a0" stroke-width="0.8"/>
<path d="M738.2,456V458" stroke="#a0a0a0" stroke-width="0.8"/>
<rect x="741" y="456.4" width="7" height="1.6" fill="#7a9a30"/>
<rect x="471" y="457.2" width="8" height="0.8" fill="#505050" opacity="0.4"/>
<rect x="527" y="457.2" width="20" height="0.8" fill="#505050" opacity="0.4"/>
<rect x="577" y="457.2" width="12" height="0.8" fill="#505050" opacity="0.4"/>
<rect x="609" y="457.2" width="12" height="0.8" fill="#505050" opacity="0.4"/>
<rect x="645" y="457.2" width="12" height="0.8" fill="#505050" opacity="0.4"/>
<rect x="676" y="457.2" width="12" height="0.8" fill="#505050" opacity="0.4"/>
<rect x="709" y="457.2" width="12" height="0.8" fill="#505050" opacity="0.4"/>
<rect x="750" y="457.2" width="20" height="0.8" fill="#505050" opacity="0.4"/>
</svg>
</body></html>
